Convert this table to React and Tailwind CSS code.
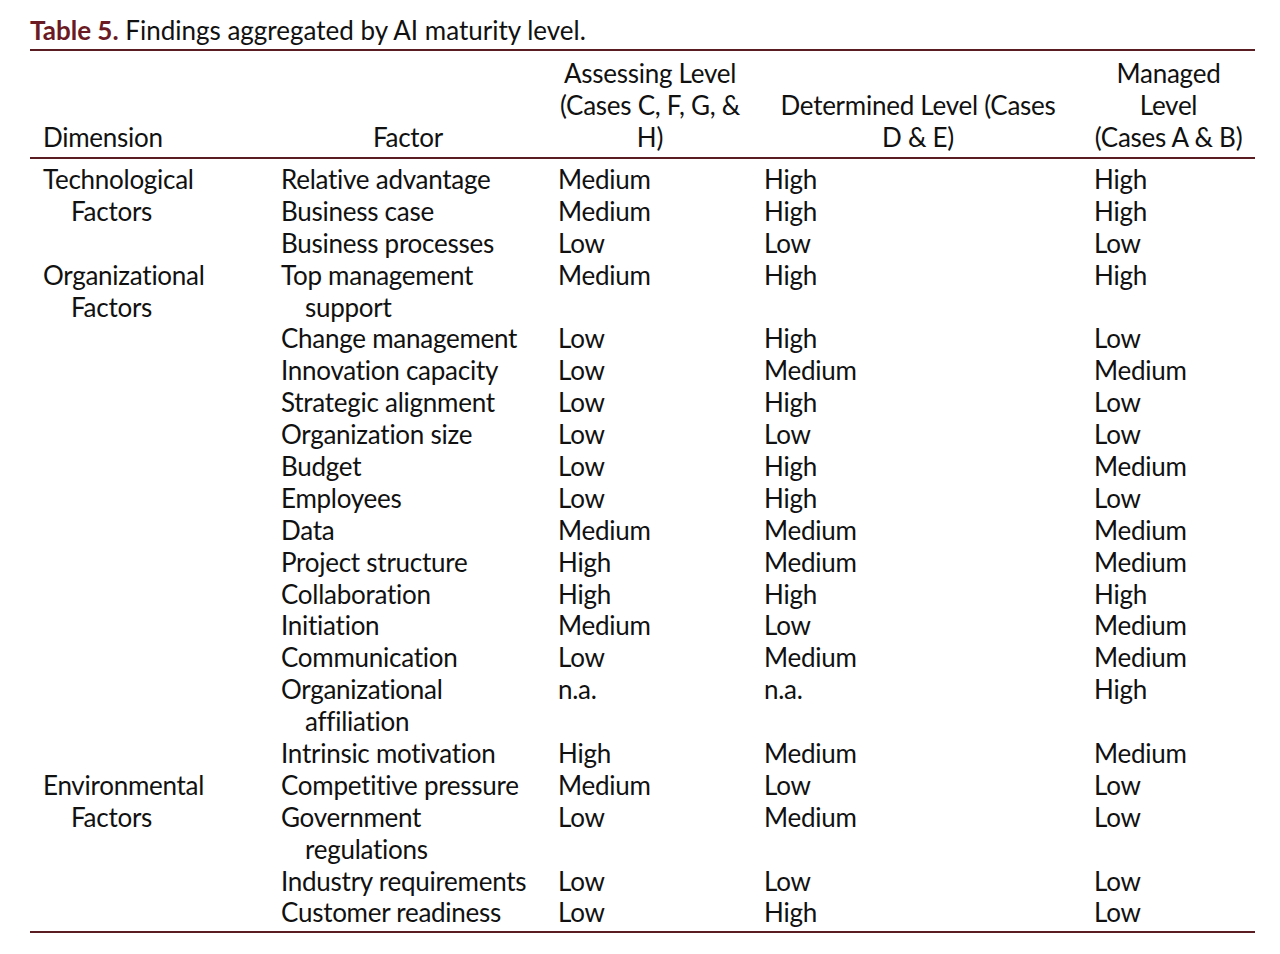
import React from "react";

const rows = [
  ["Technological", "Relative advantage", "Medium", "High", "High"],
  ["Factors", "Business case", "Medium", "High", "High"],
  ["", "Business processes", "Low", "Low", "Low"],
  ["Organizational", "Top management", "Medium", "High", "High"],
  ["Factors", "support", "", "", ""],
  ["", "Change management", "Low", "High", "Low"],
  ["", "Innovation capacity", "Low", "Medium", "Medium"],
  ["", "Strategic alignment", "Low", "High", "Low"],
  ["", "Organization size", "Low", "Low", "Low"],
  ["", "Budget", "Low", "High", "Medium"],
  ["", "Employees", "Low", "High", "Low"],
  ["", "Data", "Medium", "Medium", "Medium"],
  ["", "Project structure", "High", "Medium", "Medium"],
  ["", "Collaboration", "High", "High", "High"],
  ["", "Initiation", "Medium", "Low", "Medium"],
  ["", "Communication", "Low", "Medium", "Medium"],
  ["", "Organizational", "n.a.", "n.a.", "High"],
  ["", "affiliation", "", "", ""],
  ["", "Intrinsic motivation", "High", "Medium", "Medium"],
  ["Environmental", "Competitive pressure", "Medium", "Low", "Low"],
  ["Factors", "Government", "Low", "Medium", "Low"],
  ["", "regulations", "", "", ""],
  ["", "Industry requirements", "Low", "Low", "Low"],
  ["", "Customer readiness", "Low", "High", "Low"],
];

// continuation lines get the hanging indent
const indented = new Set(["Factors", "support", "affiliation", "regulations"]);

const cols = "grid grid-cols-[240px_276px_208px_328px_173px]";

export default function App() {
  return (
    <div className="min-h-[954px] bg-white text-[#111] font-['Lato','Liberation_Sans',sans-serif] text-[26px] tracking-[-0.01em]">
      <div className="w-[1225px] ml-[30px] pt-[14px]">
        <p className="leading-[32px] pb-[3px] tracking-normal">
          <span className="font-bold text-[#6b1a24]">Table 5.</span> Findings aggregated by AI maturity level.
        </p>
        <div className="h-[2px] bg-[#5a1e22]" />
        <div className={`${cols} items-end leading-[32px] pt-[6px] pb-[4px]`}>
          <div className="pl-[13px]">Dimension</div>
          <div className="text-center">Factor</div>
          <div className="text-center">
            Assessing Level
            <br />
            (Cases C, F, G, &amp;
            <br />
            H)
          </div>
          <div className="text-center">
            Determined Level (Cases
            <br />D &amp; E)
          </div>
          <div className="text-center">
            Managed
            <br />
            Level
            <br />
            (Cases A &amp; B)
          </div>
        </div>
        <div className="h-[2px] bg-[#5a1e22]" />
        <div className="pt-[5px] pb-[2px]">
          {rows.map((r, i) => (
            <div key={i} className={`${cols} leading-[31.9px] h-[31.9px] whitespace-nowrap`}>
              <div className={indented.has(r[0]) ? "pl-[41px]" : "pl-[13px]"}>{r[0]}</div>
              <div className={indented.has(r[1]) ? "pl-[35px]" : "pl-[11px]"}>{r[1]}</div>
              <div className="pl-[12px]">{r[2]}</div>
              <div className="pl-[10px]">{r[3]}</div>
              <div className="pl-[12px]">{r[4]}</div>
            </div>
          ))}
        </div>
        <div className="h-[2px] bg-[#5a1e22]" />
      </div>
    </div>
  );
}
